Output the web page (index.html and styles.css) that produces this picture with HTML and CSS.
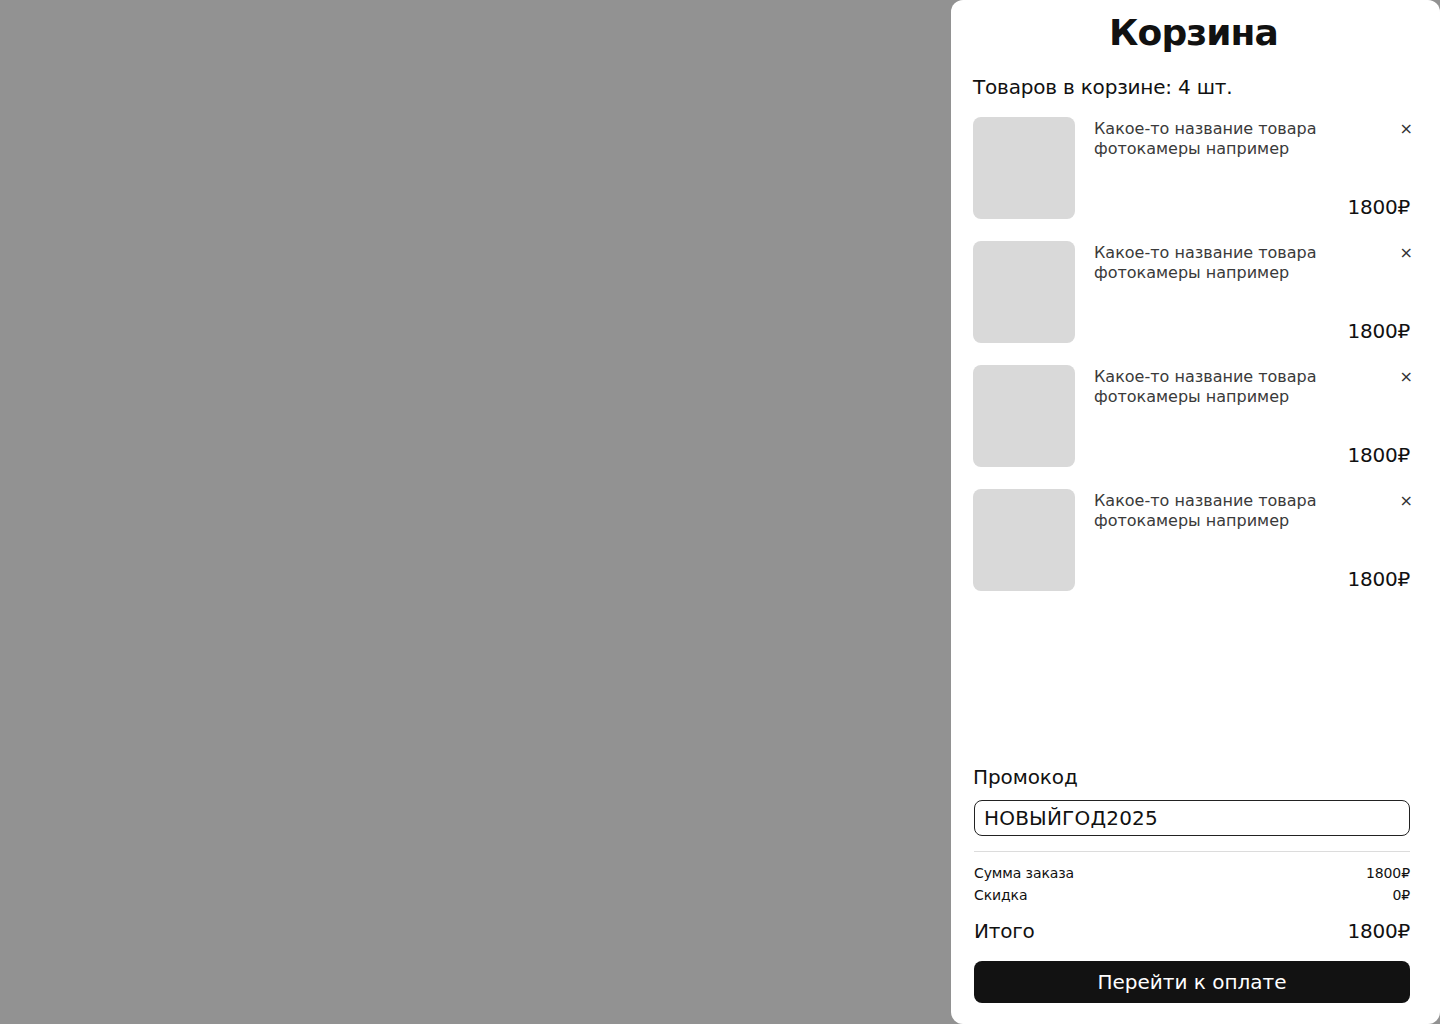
FILE: index.html
```html
<!DOCTYPE html>
<html lang="ru">
<head>
<meta charset="utf-8">
<title>Корзина</title>
<link rel="stylesheet" href="styles.css">
</head>
<body>
<div class="overlay">
  <aside class="cart">
    <h1 class="cart-title">Корзина</h1>
    <div class="cart-count">Товаров в корзине: 4 шт.</div>
    <ul class="items">
      <li class="item">
        <div class="thumb"></div>
        <div class="info">
          <div class="info-top">
            <div class="name">Какое-то название товара<br>фотокамеры например</div>
            <button class="remove">×</button>
          </div>
          <div class="price">1800₽</div>
        </div>
      </li>
      <li class="item">
        <div class="thumb"></div>
        <div class="info">
          <div class="info-top">
            <div class="name">Какое-то название товара<br>фотокамеры например</div>
            <button class="remove">×</button>
          </div>
          <div class="price">1800₽</div>
        </div>
      </li>
      <li class="item">
        <div class="thumb"></div>
        <div class="info">
          <div class="info-top">
            <div class="name">Какое-то название товара<br>фотокамеры например</div>
            <button class="remove">×</button>
          </div>
          <div class="price">1800₽</div>
        </div>
      </li>
      <li class="item">
        <div class="thumb"></div>
        <div class="info">
          <div class="info-top">
            <div class="name">Какое-то название товара<br>фотокамеры например</div>
            <button class="remove">×</button>
          </div>
          <div class="price">1800₽</div>
        </div>
      </li>
    </ul>
    <div class="bottom">
      <div class="promo-label">Промокод</div>
      <div class="promo-input">НОВЫЙГОД2025</div>
      <div class="divider"></div>
      <div class="row small"><span>Сумма заказа</span><span>1800₽</span></div>
      <div class="row small"><span>Скидка</span><span>0₽</span></div>
      <div class="row total"><span>Итого</span><span>1800₽</span></div>
      <button class="pay">Перейти к оплате</button>
    </div>
  </aside>
</div>
</body>
</html>
```
FILE: styles.css
```css
* { box-sizing: border-box; }
html, body { margin: 0; padding: 0; }
body {
  background: #929292;
  font-family: "DejaVu Sans", "Noto Sans", sans-serif;
  color: #111;
  width: 1440px;
  height: 1024px;
  overflow: hidden;
}
.overlay {
  display: flex;
  justify-content: flex-end;
  height: 1024px;
}
.cart {
  width: 489px;
  height: 1024px;
  background: #fff;
  border-radius: 12px;
  padding: 9px 30px 21px 22px;
  display: flex;
  flex-direction: column;
}
.cart-title {
  margin: 0;
  text-align: center;
  font-size: 36px;
  line-height: 48px;
  font-weight: 700;
  padding-left: 4px;
  letter-spacing: -0.9px;
}
.cart-count {
  margin-top: 17px;
  font-size: 20px;
  line-height: 26px;
  letter-spacing: -0.2px;
}
.items {
  list-style: none;
  margin: 17px 0 0;
  padding: 0;
  display: flex;
  flex-direction: column;
  gap: 22px;
}
.item {
  display: flex;
  gap: 19px;
  height: 102px;
}
.thumb {
  width: 102px;
  height: 102px;
  flex: none;
  background: #d9d9d9;
  border-radius: 8px;
}
.info {
  flex: 1;
  display: flex;
  flex-direction: column;
  justify-content: space-between;
  padding-top: 2px;
}
.info-top {
  display: flex;
  justify-content: space-between;
  align-items: flex-start;
}
.name {
  font-size: 16px;
  line-height: 20px;
  color: #3a3a3a;
  letter-spacing: 0;
}
.remove {
  border: 0;
  background: none;
  padding: 0;
  font-family: "DejaVu Sans", sans-serif;
  font-size: 16px;
  line-height: 20px;
  color: #333;
  margin-right: -3px;
  cursor: pointer;
}
.price {
  text-align: right;
  font-size: 20px;
  line-height: 24px;
  letter-spacing: -0.2px;
}
.bottom {
  margin-top: auto;
  display: flex;
  flex-direction: column;
}
.promo-label {
  font-size: 20px;
  line-height: 26px;
  letter-spacing: -0.1px;
  margin-bottom: 10px;
}
.promo-input {
  margin-left: 1px;
  height: 36px;
  border: 1px solid #222;
  border-radius: 8px;
  padding: 0 9px;
  font-size: 20px;
  line-height: 34px;
  letter-spacing: 0.2px;
}
.divider {
  margin: 15px 0 10px 1px;
  height: 1px;
  background: #dcdcdc;
}
.row {
  display: flex;
  justify-content: space-between;
  margin-left: 1px;
}
.row.small {
  font-size: 14px;
  line-height: 22px;
  letter-spacing: -0.1px;
}
.row.total {
  font-size: 20px;
  line-height: 26px;
  margin-top: 12px;
  letter-spacing: -0.2px;
}
.pay {
  margin: 17px 0 0 1px;
  height: 42px;
  border: 0;
  border-radius: 8px;
  background: #121212;
  color: #fff;
  font-family: "DejaVu Sans", sans-serif;
  font-size: 20px;
  letter-spacing: 0;
  cursor: pointer;
}
```
